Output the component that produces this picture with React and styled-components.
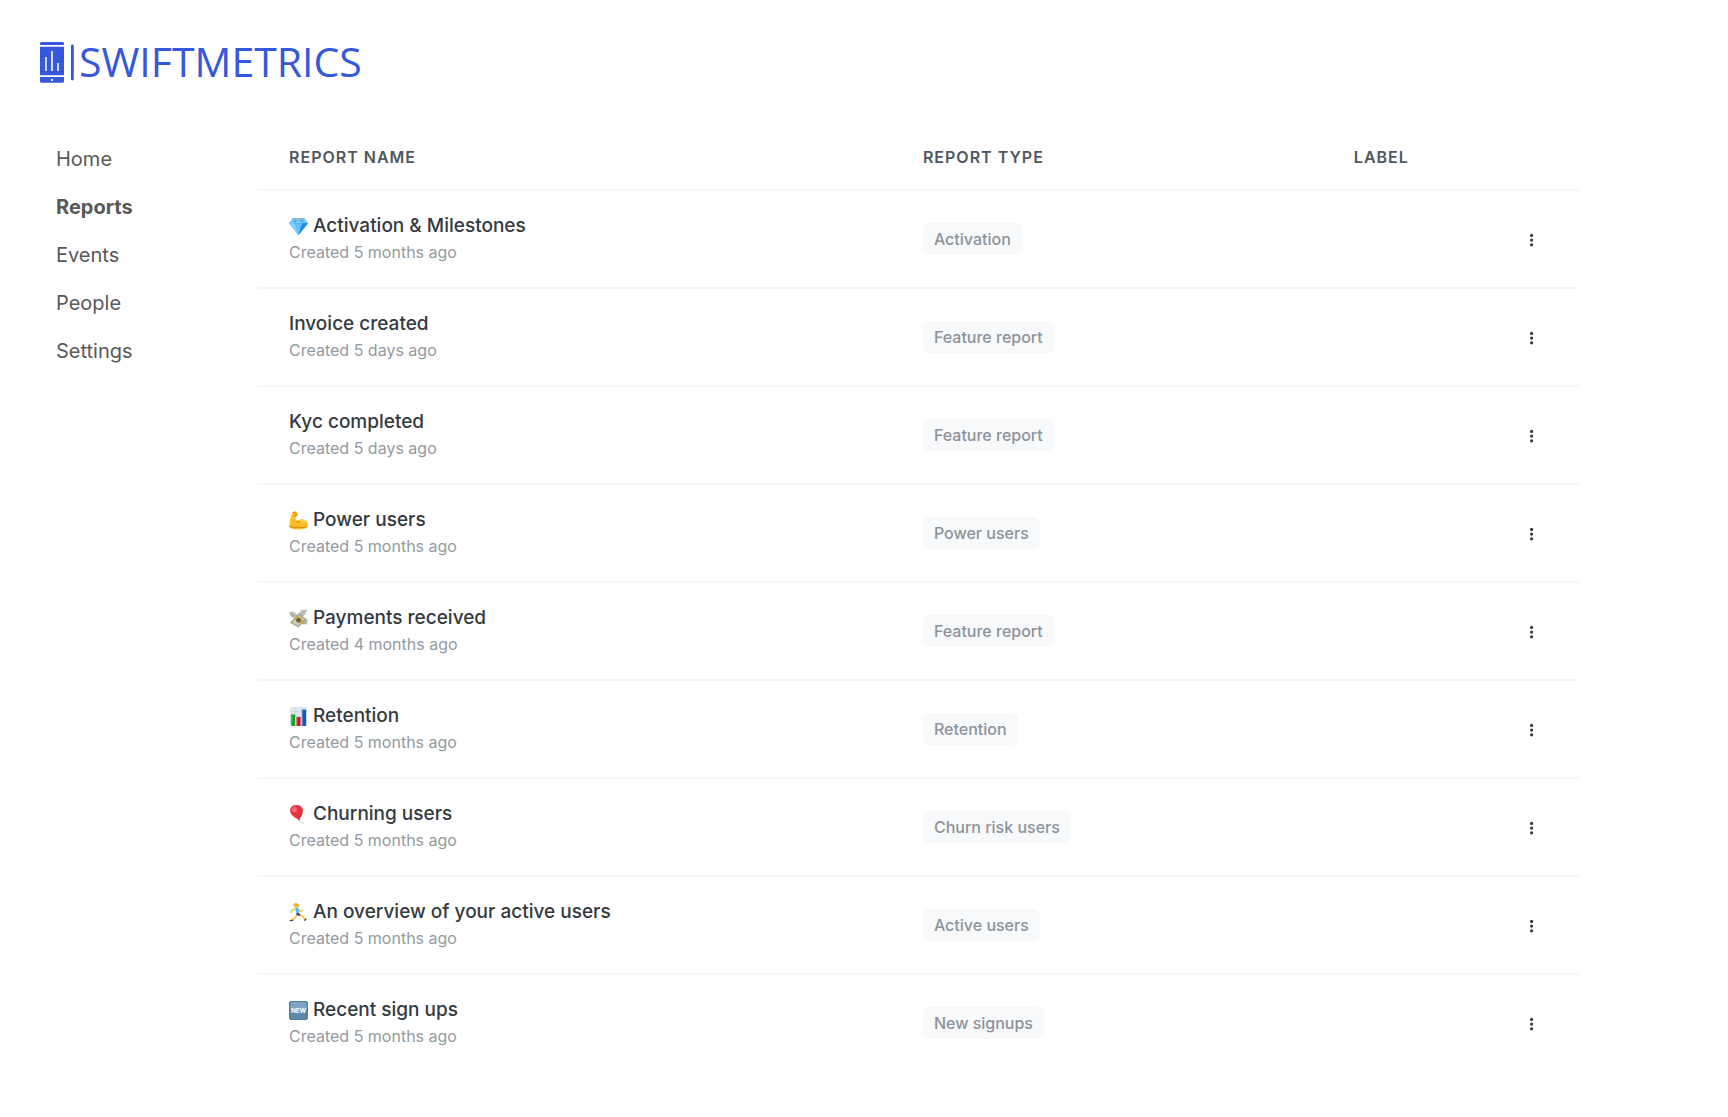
import React from "react";
import styled, { createGlobalStyle } from "styled-components";

const GlobalStyle = createGlobalStyle`
  *, *::before, *::after { box-sizing: border-box; }
  body {
    margin: 0;
    background: #fff;
    color: #343a40;
    font-family: Inter, "Liberation Sans", sans-serif;
    -webkit-font-smoothing: antialiased;
  }
`;

const Header = styled.header`
  display: flex;
  padding: 42px 40px 41px;
`;

const Brand = styled.a`
  display: flex;
  align-items: flex-start;
  gap: 5px;
  color: #3658dc;
  font-family: "Open Sans", "Noto Sans", sans-serif;
  font-size: 41px;
  line-height: 38px;
  text-decoration: none;
`;

const Body = styled.div`
  display: flex;
  align-items: flex-start;
  padding-right: 149px;
`;

const Sidebar = styled.nav`
  flex: 0 0 257px;
  padding: 11px 24px 0 56px;
`;

const NavList = styled.ul`
  margin: 0;
  padding: 0;
  list-style: none;
`;

const NavLink = styled.a`
  display: block;
  padding: 12px 0;
  color: #585858;
  font-size: 20px;
  font-weight: ${(p) => (p.$active ? 700 : 400)};
  line-height: 24px;
  text-decoration: none;
`;

const Main = styled.main`
  flex: 1;
  min-width: 0;
  padding-bottom: 48px;
`;

const Table = styled.table`
  width: 100%;
  border-collapse: separate;
  border-spacing: 0;
  table-layout: fixed;
`;

const HeadCell = styled.th`
  width: ${(p) => p.$width};
  height: 67px;
  padding: 0 32px;
  border-bottom: 2px solid #f5f6f7;
  color: #50575e;
  font-size: 16px;
  font-weight: 600;
  line-height: 24px;
  letter-spacing: 1px;
  text-align: left;
  text-transform: uppercase;
`;

const Row = styled.tr`
  &:last-child > td {
    border-bottom-color: transparent;
  }
`;

const Cell = styled.td`
  height: 98px;
  padding: 0 32px;
  border-bottom: 2px solid #f5f6f7;
  text-align: ${(p) => p.$align || "left"};
  vertical-align: middle;
`;

const NameCell = styled(Cell)`
  padding-bottom: 2px;
`;

const ReportLink = styled.a`
  display: flex;
  align-items: center;
  gap: 5px;
  color: #343a40;
  font-size: 19px;
  font-weight: 500;
  line-height: 28px;
  text-decoration: none;
`;

const Created = styled.div`
  color: #949aa1;
  font-size: 16px;
  line-height: 24px;
`;

const Tag = styled.span`
  display: inline-block;
  padding: 4px 11px;
  border-radius: 6px;
  background: #f8f9fb;
  color: #8c939a;
  font-size: 16px;
  font-weight: 500;
  line-height: 24px;
  vertical-align: middle;
`;

const MenuButton = styled.button`
  display: inline-flex;
  align-items: center;
  justify-content: center;
  width: 32px;
  height: 32px;
  padding: 0;
  border: 0;
  border-radius: 6px;
  background: transparent;
  color: #343a40;
  vertical-align: middle;
  cursor: pointer;
`;

const BrandMark = () => (
  <svg width="34" height="41" viewBox="0 0 34 41" fill="#3658dc" aria-hidden="true">
    <path d="M0 3V1.5Q0 0 1.5 0h21Q24 0 24 1.5V3z" />
    <path fillRule="evenodd" d="M0 4.700h24v28.500H0zM5.200 15v14h1.500V15zM11.200 9v20h1.600V9zM17.300 21v8h1.500v-8z" />
    <path fillRule="evenodd" d="M0 35h24v4.200q0 1.500-1.500 1.500h-21Q0 40.700 0 39.200zM11 37v2h2v-2z" />
    <rect x="31" y="2.500" width="2.800" height="36" rx="1.400" />
  </svg>
);

const Kebab = () => (
  <svg width="16" height="16" viewBox="0 0 16 16" fill="currentColor" aria-hidden="true">
    <circle cx="8.600" cy="4.400" r="1.600" />
    <circle cx="8.600" cy="9.100" r="1.600" />
    <circle cx="8.600" cy="13.800" r="1.600" />
  </svg>
);

const drawings = {
  gem: (
    <>
      <path d="M3.500 1.500h11L18 6 9 17 0 6z" fill="#39a5f5" />
      <path d="M3.500 1.500h11L18 6H0z" fill="#7cc9fb" />
      <path d="M3.500 1.500 5.500 6 9 1.500 12.500 6l2-4.500z" fill="#4da9ee" />
      <path d="M5.500 6h7L9 17z" fill="#64bdfd" />
      <path d="M0 6h5.500L9 17z" fill="#7fd0ff" />
      <path d="M12.500 6H18L9 17z" fill="#238be2" />
      <path d="M3.500 1.500h11l1 1.200h-13z" fill="#9ab9d0" />
    </>
  ),
  biceps: (
    <>
      <path d="M3.300 1.200Q5-.3 7 .8l1 .9Q9 3 7.800 4.500L6.400 6Q6 8.500 7.500 9.700 9.500 7.300 13 7.800q4.500.8 4.700 5.200.1 3-3 3.800Q8 18.400 2 16.500.2 15.700.5 13 .9 6.500 3.300 1.200z" fill="#fcbd27" />
      <path d="M7.500 9.700q1 1 2.500 1M4 1.500l3 1.300M5 4.800l2.500-.6M.8 14.500q3 2 7 .7 4 1.500 8-.2" fill="none" stroke="#e08a10" strokeWidth="1" strokeLinecap="round" />
      <path d="M10 9.700q3-1.200 5.500.7" fill="none" stroke="#ffe066" strokeWidth="1" />
    </>
  ),
  money: (
    <>
      <path d="M0 3q3-2 6 .2 1.500 1.300 1.700 3.300L5 8.500Q1.500 8 0 3zM8.500 5 12 .5q2.700.7 5.500-.2-.5 3-2.300 4.200L12 8zM12 11.500 17.500 9q.8 3.500-.8 6L12 14z" fill="#c9cbc4" />
      <path d="m1 4 5 2.500M1.500 6 5 7.500M10.500 5l5.500-3.500M12 6.500l3.500-2M13 12.500l4-1.500M13 14l3.500-.7" stroke="#85887f" strokeWidth=".7" />
      <path d="M1 13 9 4l7.500 5.500-7.500 8z" fill="#a2a184" />
      <path d="M2.800 12.800 9.200 5.600l5.700 4.200-6 6.300z" fill="#cdcbb0" />
      <path d="m4.500 9.200 7 5.200 3-3L7.300 6z" fill="#d2a550" />
      <circle cx="9" cy="10.700" r="2.200" fill="#62634f" />
    </>
  ),
  chart: (
    <>
      <path d="M1 0h16v18H1z" fill="#dde8f0" />
      <path d="M1 4.500h16M1 9h16M1 13.500h16M6 0v18M12 0v18" stroke="#bdd0dd" strokeWidth=".6" />
      <path d="M1.800 7h4v11h-4z" fill="#16a32c" />
      <path d="M7 9.500h4V18H7z" fill="#c9182c" />
      <path d="M12.200 2.500h4V18h-4z" fill="#1558b8" />
      <path d="M1.800 7H3v11H1.800zM7 9.500h1.200V18H7zM12.200 2.500h1.200V18h-1.200z" fill="#fff" opacity=".22" />
    </>
  ),
  balloon: (
    <>
      <path d="m9.500 13 .5 1.800q1.500 1.800 4.500 2.700" fill="none" stroke="#c9c9c9" strokeWidth=".8" />
      <path d="M7 0q6 0 6 5.500 0 4.500-3 7.500l.7 1.200-2.200.3-.2-1.200Q1 10 1 5.500 1 0 7 0z" fill="#e83440" />
      <ellipse cx="5" cy="4.200" rx="2.300" ry="2.800" fill="#fa7780" opacity=".75" transform="rotate(25 5 4.200)" />
      <path d="M12.500 4q.3 5-3.500 8.500" fill="none" stroke="#c41e2c" strokeWidth=".8" />
    </>
  ),
  runner: (
    <>
      <g fill="none" strokeLinecap="round" strokeLinejoin="round">
        <path d="m7.500 11.500-2.200 3-2.800 1.300M9.500 11l3.300 1.500 2.200 3" stroke="#f9c644" strokeWidth="1.600" />
        <path d="M6 5.500 3 6.500 2 9M9.500 6l1.500 2 1.800-.8" stroke="#f9c13b" strokeWidth="1.300" />
        <path d="m7.500 5.500.8 3" stroke="#4fc3df" strokeWidth="3" />
        <path d="m8 10.500 1.500.5" stroke="#40479a" strokeWidth="2.400" />
        <path d="m1.200 16.800 2.300-.3M15 16.500l1-1.500" stroke="#414070" strokeWidth="1.200" />
      </g>
      <circle cx="6.300" cy="2.400" r="2" fill="#f9c13b" />
      <path d="M4.300 1.500Q5-.2 7.500.3q2 .5 2 2.700-.6 1.500-1.700.5-.2-2-3.500-2z" fill="#eaa42a" />
    </>
  ),
  fresh: (
    <>
      <rect width="18" height="18" rx="3" fill="#5f88ab" />
      <rect x="1" y="1" width="16" height="8" rx="2" fill="#7ea5c4" />
      <rect x=".5" y=".5" width="17" height="17" rx="2.500" fill="none" stroke="#527b9e" />
      <text x="9" y="11.500" fill="#fff" fontFamily="Inter, sans-serif" fontSize="6" fontWeight="700" textAnchor="middle">NEW</text>
    </>
  ),
};

const Emoji = ({ name }) => (
  <svg width="19" height="19" viewBox="0 0 18 18" aria-hidden="true">
    {drawings[name]}
  </svg>
);

const links = ["Home", "Reports", "Events", "People", "Settings"];

const reports = [
  { emoji: "gem", name: "Activation & Milestones", age: "5 months", type: "Activation" },
  { name: "Invoice created", age: "5 days", type: "Feature report" },
  { name: "Kyc completed", age: "5 days", type: "Feature report" },
  { emoji: "biceps", name: "Power users", age: "5 months", type: "Power users" },
  { emoji: "money", name: "Payments received", age: "4 months", type: "Feature report" },
  { emoji: "chart", name: "Retention", age: "5 months", type: "Retention" },
  { emoji: "balloon", name: "Churning users", age: "5 months", type: "Churn risk users" },
  { emoji: "runner", name: "An overview of your active users", age: "5 months", type: "Active users" },
  { emoji: "fresh", name: "Recent sign ups", age: "5 months", type: "New signups" },
];

export default function App() {
  return (
    <>
      <GlobalStyle />
      <Header>
        <Brand href="#">
          <BrandMark />
          <span>SWIFTMETRICS</span>
        </Brand>
      </Header>
      <Body>
        <Sidebar aria-label="Main">
          <NavList>
            {links.map((link) => (
              <li key={link}>
                <NavLink
                  href="#"
                  $active={link === "Reports"}
                  aria-current={link === "Reports" ? "page" : undefined}
                >
                  {link}
                </NavLink>
              </li>
            ))}
          </NavList>
        </Sidebar>
        <Main>
          <Table>
            <thead>
              <tr>
                <HeadCell scope="col" $width="47.95%">Report name</HeadCell>
                <HeadCell scope="col" $width="32.6%">Report type</HeadCell>
                <HeadCell scope="col">Label</HeadCell>
                <HeadCell scope="col" $width="96px" aria-label="Actions" />
              </tr>
            </thead>
            <tbody>
              {reports.map((report) => (
                <Row key={report.name}>
                  <NameCell>
                    <ReportLink href="#">
                      {report.emoji && <Emoji name={report.emoji} />}
                      {report.name}
                    </ReportLink>
                    <Created>Created {report.age} ago</Created>
                  </NameCell>
                  <Cell>
                    <Tag>{report.type}</Tag>
                  </Cell>
                  <Cell />
                  <Cell $align="right">
                    <MenuButton type="button" aria-label={`Actions for ${report.name}`}>
                      <Kebab />
                    </MenuButton>
                  </Cell>
                </Row>
              ))}
            </tbody>
          </Table>
        </Main>
      </Body>
    </>
  );
}
